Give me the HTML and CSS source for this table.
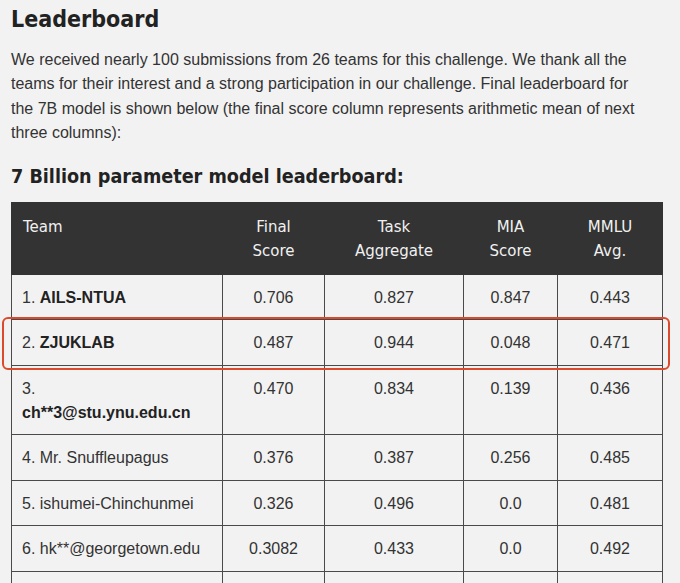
FILE: index.html
```html
<!DOCTYPE html>
<html lang="en">
<head>
<meta charset="utf-8">
<title>Leaderboard</title>
<link rel="stylesheet" href="styles.css">
</head>
<body>
<main class="page">
  <h1 class="title">Leaderboard</h1>
  <p class="intro">We received nearly 100 submissions from 26 teams for this challenge. We thank all the teams for their interest and a strong participation in our challenge. Final leaderboard for the&nbsp;7B model is shown below (the final score column represents arithmetic mean of next three columns):</p>
  <h2 class="subtitle">7 Billion parameter model leaderboard:</h2>
  <div class="board">
    <table class="scores">
      <colgroup>
        <col class="c-team">
        <col class="c-final">
        <col class="c-task">
        <col class="c-mia">
        <col class="c-mmlu">
      </colgroup>
      <thead>
        <tr>
          <th class="team">Team</th>
          <th>Final<br>Score</th>
          <th>Task<br>Aggregate</th>
          <th>MIA<br>Score</th>
          <th>MMLU<br>Avg.</th>
        </tr>
      </thead>
      <tbody>
        <tr><td class="team">1. <b>AILS-NTUA</b></td><td>0.706</td><td>0.827</td><td>0.847</td><td>0.443</td></tr>
        <tr><td class="team">2. <b>ZJUKLAB</b></td><td>0.487</td><td>0.944</td><td>0.048</td><td>0.471</td></tr>
        <tr><td class="team">3. <b>ch**3@stu.ynu.edu.cn</b></td><td>0.470</td><td>0.834</td><td>0.139</td><td>0.436</td></tr>
        <tr><td class="team">4. Mr. Snuffleupagus</td><td>0.376</td><td>0.387</td><td>0.256</td><td>0.485</td></tr>
        <tr><td class="team">5. ishumei-Chinchunmei</td><td>0.326</td><td>0.496</td><td>0.0</td><td>0.481</td></tr>
        <tr><td class="team">6. hk**@georgetown.edu</td><td>0.3082</td><td>0.433</td><td>0.0</td><td>0.492</td></tr>
        <tr class="more"><td class="team"></td><td></td><td></td><td></td><td></td></tr>
      </tbody>
    </table>
    <div class="highlight"></div>
  </div>
</main>
</body>
</html>
```
FILE: styles.css
```css
html, body {
  margin: 0;
  padding: 0;
  background: #f2f2f2;
}
.page {
  padding: 0 11px;
  color: #333;
  font-family: "Liberation Sans", Arial, sans-serif;
}
.title {
  margin: 4px 0 0;
  font-family: "DejaVu Sans Condensed", "DejaVu Sans", sans-serif;
  font-weight: bold;
  font-size: 23px;
  line-height: 30px;
  color: #222;
}
.intro {
  margin: 14px 0 0;
  font-size: 16px;
  line-height: 24.4px;
  color: #333;
}
.subtitle {
  margin: 18.5px 0 0;
  font-family: "DejaVu Sans Condensed", "DejaVu Sans", sans-serif;
  font-weight: bold;
  font-size: 19.6px;
  line-height: 26px;
  color: #222;
}
.board {
  position: relative;
  margin-top: 11.6px;
  width: 651px;
}
.scores {
  width: 651px;
  table-layout: fixed;
  border-collapse: collapse;
  font-size: 16px;
  line-height: 24px;
  color: #333;
}
.c-team { width: 211px; }
.c-final { width: 102px; }
.c-task { width: 139px; }
.c-mia { width: 94px; }
.c-mmlu { width: 105px; }
.scores th {
  background: #333;
  color: #f0f0f0;
  font-family: "DejaVu Sans", sans-serif;
  font-weight: normal;
  font-size: 15px;
  line-height: 24px;
  text-align: center;
  vertical-align: top;
  padding: 12px 10px 11px;
  border: 1px solid #333;
}
.scores th.team {
  text-align: left;
  padding-left: 11px;
}
.scores td {
  border: 1px solid #4a4a4a;
  padding: 11px 10px 9.5px;
  text-align: center;
  vertical-align: top;
}
.scores td.team {
  text-align: left;
  padding-left: 10px;
  padding-right: 18px;
}
.scores .more td {
  height: 24px;
}
.scores b {
  font-weight: bold;
  color: #222;
}
.highlight {
  position: absolute;
  left: -9px;
  top: 115px;
  width: 664px;
  height: 49px;
  border: 2px solid #dc4a2c;
  border-radius: 6px;
}
```
